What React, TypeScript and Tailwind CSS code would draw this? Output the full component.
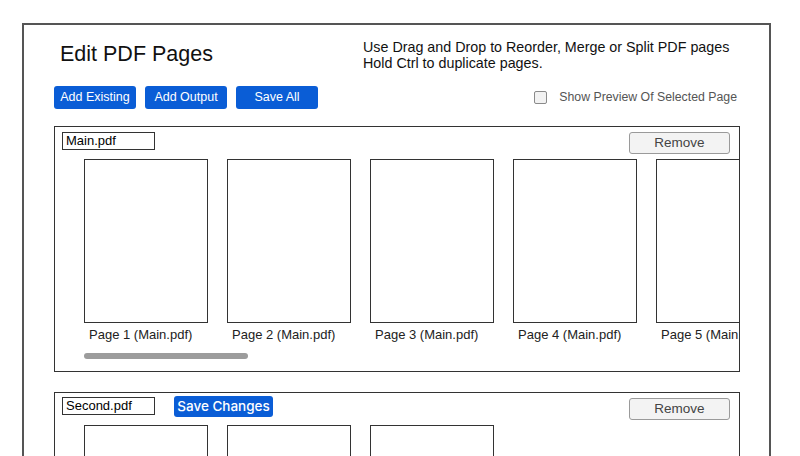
const FONT = "font-['Liberation_Sans',Arial,sans-serif]";

const PAGE_NUMBERS = [1, 2, 3, 4, 5];

interface PdfPanelProps {
  fileName: string;
  pageCount: number;
  showSave?: boolean;
}

function PdfPanel({ fileName, pageCount, showSave }: PdfPanelProps) {
  return (
    <div className="w-[686px] shrink-0 border border-[#333] bg-white pb-[12px]">
      {/* Header row: file name, optional save, remove */}
      <div className="flex h-[27px] items-start pl-[7px] pr-[9px] pt-[3px]">
        <div
          className={`flex h-[18px] w-[93px] items-center border border-[#333] pl-[3px] text-[13px] text-black ${showSave ? "mt-[1px]" : "mt-[2px]"}`}
        >
          {fileName}
        </div>
        {showSave && (
          <button className="ml-[19px] h-[21px] w-[99px] rounded-[3px] bg-[#0a5dd6] font-['Inter',sans-serif] text-[13.5px] font-medium text-white">
            Save Changes
          </button>
        )}
        <button className="ml-auto mt-[2px] h-[22px] w-[101px] rounded-[3px] border border-[#9a9a9a] bg-[#f3f3f3] text-[13.5px] text-[#444]">
          Remove
        </button>
      </div>

      {/* Page thumbnails strip */}
      <div className="mt-[5px] overflow-hidden">
        <div className="flex gap-[19px] pl-[29px]">
          {PAGE_NUMBERS.slice(0, pageCount).map((n) => (
            <div key={n} className="w-[124px] shrink-0">
              <div className="h-[164px] border border-[#333] bg-white" />
              <div className="mt-[4px] whitespace-nowrap pl-[5px] text-[13px] leading-[16px] text-[#222]">
                Page {n} ({fileName})
              </div>
            </div>
          ))}
        </div>
      </div>

      {/* Fake horizontal scrollbar */}
      <div className="ml-[29px] mt-[10px] h-[6px] w-[164px] rounded-full bg-[#9c9c9c]" />
    </div>
  );
}

export default function App() {
  return (
    <div className={`h-[456px] overflow-hidden bg-white ${FONT}`}>
      <div className="ml-[22px] mt-[23px] w-[749px] border-2 border-[#555] px-[30px] pt-[13px] pb-[40px]">
        {/* Title and instructions */}
        <div className="flex">
          <h1 className="ml-[6px] mt-[5px] w-[303px] shrink-0 whitespace-nowrap text-[21.5px] leading-[22px] font-normal text-[#111]">
            Edit PDF Pages
          </h1>
          <div className="mt-[1px] whitespace-nowrap text-[14.3px] leading-[16.3px] text-[#111]">
            <p>Use Drag and Drop to Reorder, Merge or Split PDF pages</p>
            <p>Hold Ctrl to duplicate pages.</p>
          </div>
        </div>

        {/* Toolbar */}
        <div className="mt-[14px] flex items-center gap-[9px]">
          <button className="h-[23px] w-[82px] rounded-[3px] bg-[#0a5dd6] text-[12.5px] text-white">
            Add Existing
          </button>
          <button className="h-[23px] w-[82px] rounded-[3px] bg-[#0a5dd6] text-[12.5px] text-white">
            Add Output
          </button>
          <button className="h-[23px] w-[82px] rounded-[3px] bg-[#0a5dd6] text-[12.5px] text-white">
            Save All
          </button>
          <label className="ml-auto mr-[2px] flex items-center gap-[12px] text-[12.3px] text-[#555]">
            <span className="h-[13px] w-[13px] rounded-[2px] border border-[#8a8a8a] bg-[#f2f2f2]" />
            Show Preview Of Selected Page
          </label>
        </div>

        {/* PDF panels */}
        <div className="mt-[17px] flex flex-col gap-[20px]">
          <PdfPanel fileName="Main.pdf" pageCount={5} />
          <PdfPanel fileName="Second.pdf" pageCount={3} showSave />
        </div>
      </div>
    </div>
  );
}
